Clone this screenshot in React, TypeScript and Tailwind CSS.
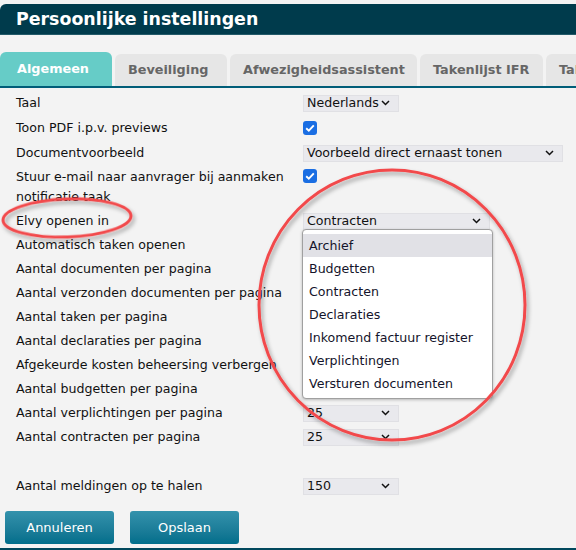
import React from 'react'

const font = "font-['DejaVu_Sans',Verdana,sans-serif]"

function Chevron() {
  return (
    <svg width="9" height="6" viewBox="0 0 9 6" className="shrink-0">
      <path d="M1 1 L4.5 4.5 L8 1" fill="none" stroke="#111" strokeWidth="1.5" />
    </svg>
  )
}

function Select({ value, className }: { value: string; className: string }) {
  return (
    <div
      className={`h-[17px] bg-[#e9e9ed] border border-[#e0e0e4] flex items-center justify-between pl-[3px] pr-[8px] text-[12.6px] leading-none text-[#111] ${className}`}
    >
      <span>{value}</span>
      <Chevron />
    </div>
  )
}

function Checkbox({ className = '' }: { className?: string }) {
  return (
    <div className={`w-[14px] h-[14px] rounded-[3px] bg-[#1a6ee3] flex items-center justify-center ${className}`}>
      <svg width="10" height="8" viewBox="0 0 10 8">
        <path d="M1.2 4.2 L3.8 6.6 L8.8 1.3" fill="none" stroke="#fff" strokeWidth="1.9" />
      </svg>
    </div>
  )
}

type Row = { label: React.ReactNode; key: string; control?: React.ReactNode; h?: string; top?: boolean }

// controls of the rows behind the open list are not visible in the screenshot
const rows: Row[] = [
  { key: 'taal', label: 'Taal', control: <Select value="Nederlands" className="w-[96px]" /> },
  { key: 'pdf', label: 'Toon PDF i.p.v. previews', control: <Checkbox />, h: 'h-[26px]' },
  { key: 'doc', label: 'Documentvoorbeeld', control: <Select value="Voorbeeld direct ernaast tonen" className="w-[260px]" /> },
  {
    key: 'mail',
    label: (
      <>
        Stuur e-mail naar aanvrager bij aanmaken
        <br />
        notificatie taak
      </>
    ),
    control: <Checkbox className="mt-[4px]" />,
    h: 'h-[44px]',
    top: true,
  },
  { key: 'elvy', label: 'Elvy openen in', control: <Select value="Contracten" className="w-[187px]" /> },
  { key: 'auto', label: 'Automatisch taken openen' },
  { key: 'docs', label: 'Aantal documenten per pagina' },
  { key: 'verz', label: 'Aantal verzonden documenten per pagina' },
  { key: 'tak', label: 'Aantal taken per pagina' },
  { key: 'decl', label: 'Aantal declaraties per pagina' },
  { key: 'afg', label: 'Afgekeurde kosten beheersing verbergen' },
  { key: 'bud', label: 'Aantal budgetten per pagina' },
  { key: 'verp', label: 'Aantal verplichtingen per pagina', control: <Select value="25" className="w-[96px]" /> },
  { key: 'con', label: 'Aantal contracten per pagina', control: <Select value="25" className="w-[96px]" /> },
]

const tabs = [
  { t: 'Beveiliging', w: 'w-[112px]' },
  { t: 'Afwezigheidsassistent', w: 'w-[187px]' },
  { t: 'Takenlijst IFR', w: 'w-[123px]' },
  { t: 'Takenlijst', w: 'w-[120px]' },
]

const options = ['Archief', 'Budgetten', 'Contracten', 'Declaraties', 'Inkomend factuur register', 'Verplichtingen', 'Versturen documenten']

export default function App() {
  return (
    <div className={`relative w-[576px] h-[550px] overflow-hidden bg-[#f3f3f3] ${font}`}>
      {/* header */}
      <div className="pt-[4px]">
        <div className="h-[31px] bg-[#003b4c] border-b border-[#235a69] rounded-tl-[6px] flex items-center pl-4 text-white font-bold text-[17.4px]">
          Persoonlijke instellingen
        </div>
      </div>

      {/* tabs */}
      <div className="mt-[17px] flex items-end gap-[3px] border-b-2 border-[#005d78] whitespace-nowrap overflow-hidden">
        <div className="h-[36px] -mb-[2px] w-[112px] shrink-0 bg-[#66ccc7] rounded-t-[6px] flex items-center pl-[17px] pb-[3px] text-white font-bold text-[12.8px]">
          Algemeen
        </div>
        {tabs.map((t) => (
          <div key={t.t} className={`h-[32px] shrink-0 ${t.w} bg-[#e6e6e6] rounded-t-[6px] flex items-center pl-[13px] text-[#666] font-bold text-[12.8px]`}>
            {t.t}
          </div>
        ))}
      </div>

      {/* settings */}
      <div className="pt-[3px] text-[12.6px] text-[#111]">
        {rows.map((r) => (
          <div key={r.key} className={`flex ${r.top ? 'items-start' : 'items-center'} ${r.h ?? 'h-[24px]'}`}>
            <div className={`w-[303px] shrink-0 pl-4 leading-[20px] whitespace-nowrap ${r.top ? 'pt-[2px]' : ''}`}>{r.label}</div>
            {r.control}
          </div>
        ))}
        <div className="flex items-center h-[24px] mt-[25px]">
          <div className="w-[303px] shrink-0 pl-4 leading-[20px]">Aantal meldingen op te halen</div>
          <Select value="150" className="w-[96px]" />
        </div>
      </div>

      {/* buttons */}
      <div className="mt-[13px] flex gap-[16px] pl-[5px]">
        <button className="w-[109px] h-[33px] rounded-[3px] bg-gradient-to-b from-[#3392ac] to-[#006e8b] text-white text-[13px]">
          Annuleren
        </button>
        <button className="w-[109px] h-[33px] rounded-[3px] bg-gradient-to-b from-[#3392ac] to-[#006e8b] text-white text-[13px]">
          Opslaan
        </button>
      </div>
      <div className="mt-[4px] h-[2px] bg-[#00475c]" />

      {/* open dropdown list */}
      <div className="absolute left-[302px] top-[229px] w-[191px] h-[170px] bg-white border border-[#a0a0a0] rounded-[4px] shadow-[0_1px_3px_rgba(0,0,0,0.25)] pt-[4px] text-[12.6px] text-[#14142b]">
        {options.map((o, i) => (
          <div key={o} className={`h-[23px] flex items-center pl-[6px] pt-[1px] ${i === 0 ? 'bg-[#e1e1e6]' : ''}`}>
            {o}
          </div>
        ))}
      </div>

      {/* red annotation circles */}
      <svg className="absolute inset-0 pointer-events-none" width="576" height="550" viewBox="0 0 576 550">
        <defs>
          <filter id="sh" x="-20%" y="-20%" width="140%" height="140%">
            <feDropShadow dx="2" dy="3" stdDeviation="2" floodColor="#000" floodOpacity="0.35" />
          </filter>
        </defs>
        <ellipse cx="67" cy="218" rx="64" ry="19" fill="none" stroke="#f24a4c" strokeWidth="3" filter="url(#sh)" transform="rotate(-2 67 218)" />
        <ellipse cx="392" cy="305" rx="133" ry="135" fill="none" stroke="#f24a4c" strokeWidth="3" filter="url(#sh)" />
      </svg>
    </div>
  )
}
